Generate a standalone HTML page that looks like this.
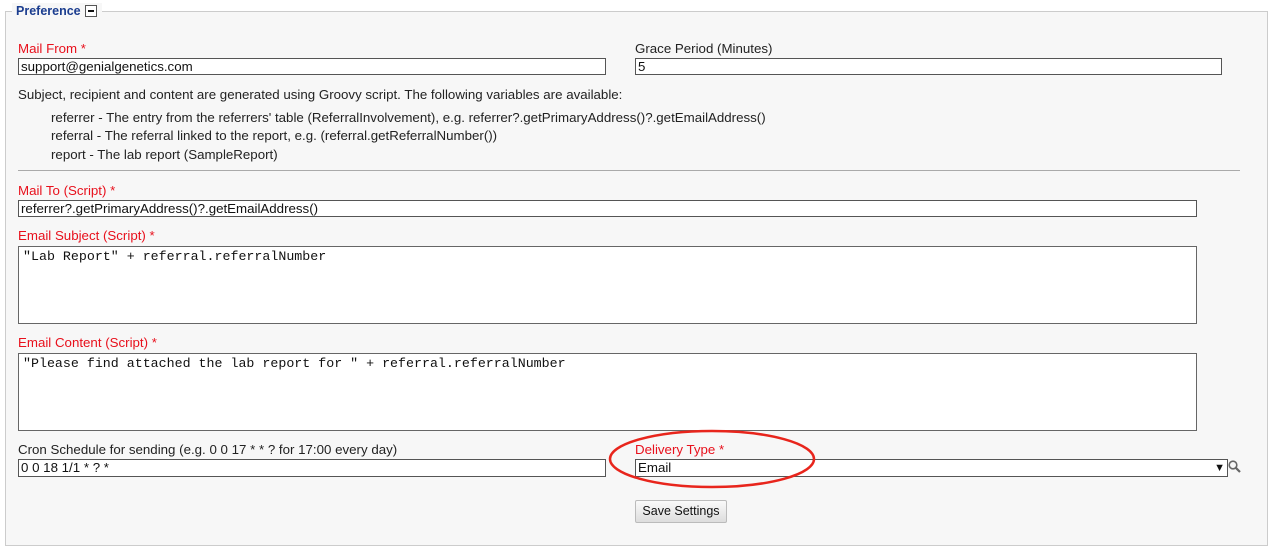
<!DOCTYPE html>
<html><head><style>
body{margin:0;width:1279px;height:552px;background:#fff;font-family:"Liberation Sans",sans-serif;font-size:13.3px;color:#222;position:relative;overflow:hidden}
.a{position:absolute;white-space:nowrap}
.fs{position:absolute;left:5px;top:11px;width:1261px;height:533px;border:1px solid #ccc;background:#f7f7f7}
.lbl{color:#e8101c}
.in{position:absolute;background:#fff;border:1px solid #555;box-sizing:border-box;font-size:13.3px;line-height:15px;padding-left:2px;color:#111}
.ta{position:absolute;background:#fff;border:1px solid #666;box-sizing:border-box;font-family:"Liberation Mono",monospace;font-size:13.3px;padding:2px 4px;color:#111}
</style></head><body>
<div class="fs"></div>
<div class="a" style="left:12px;top:3px;background:#f7f7f7;width:90px;height:16px"></div>
<div class="a" style="left:16px;top:4px;font-weight:bold;font-size:12.5px;color:#1b3d8f">Preference</div>
<div class="a" style="left:85px;top:5px;width:10px;height:10px;border:1px solid #555;background:#fff"><div style="position:absolute;left:2px;top:4px;width:6px;height:2px;background:#111"></div></div>

<div class="a lbl" style="left:18px;top:41px">Mail From *</div>
<div class="in" style="left:18px;top:58px;width:588px;height:17px">support@genialgenetics.com</div>
<div class="a" style="left:635px;top:41px">Grace Period (Minutes)</div>
<div class="in" style="left:635px;top:58px;width:587px;height:17px">5</div>

<div class="a" style="left:18px;top:87px">Subject, recipient and content are generated using Groovy script. The following variables are available:</div>
<div class="a" style="left:51px;top:110px">referrer - The entry from the referrers' table (ReferralInvolvement), e.g. referrer?.getPrimaryAddress()?.getEmailAddress()</div>
<div class="a" style="left:51px;top:128px">referral - The referral linked to the report, e.g. (referral.getReferralNumber())</div>
<div class="a" style="left:51px;top:147px">report - The lab report (SampleReport)</div>
<div class="a" style="left:18px;top:170px;width:1222px;height:1px;background:#aaa"></div>

<div class="a lbl" style="left:18px;top:183px">Mail To (Script) *</div>
<div class="in" style="left:18px;top:200px;width:1179px;height:17px">referrer?.getPrimaryAddress()?.getEmailAddress()</div>

<div class="a lbl" style="left:18px;top:228px">Email Subject (Script) *</div>
<div class="ta" style="left:18px;top:246px;width:1179px;height:78px">"Lab Report" + referral.referralNumber</div>

<div class="a lbl" style="left:18px;top:335px">Email Content (Script) *</div>
<div class="ta" style="left:18px;top:353px;width:1179px;height:78px">"Please find attached the lab report for " + referral.referralNumber</div>

<div class="a" style="left:18px;top:442px">Cron Schedule for sending (e.g. 0 0 17 * * ? for 17:00 every day)</div>
<div class="in" style="left:18px;top:459px;width:588px;height:18px">0 0 18 1/1 * ? *</div>
<div class="a lbl" style="left:635px;top:442px">Delivery Type *</div>
<div class="in" style="left:635px;top:459px;width:593px;height:18px">Email<span style="position:absolute;right:2px;top:1px;font-size:11px">▼</span></div>
<svg class="a" style="left:1228px;top:459px" width="14" height="16" viewBox="0 0 14 16"><circle cx="5" cy="6" r="3.8" fill="none" stroke="#666" stroke-width="1.6"/><line x1="7.8" y1="8.8" x2="12" y2="13" stroke="#666" stroke-width="2.2"/></svg>

<div class="a" style="left:635px;top:500px;width:92px;height:23px;border:1px solid #bbb;border-radius:2px;background:linear-gradient(#fafafa,#ddd);box-sizing:border-box;font-size:12.5px;text-align:center;line-height:21px;color:#111">Save Settings</div>

<svg class="a" style="left:605px;top:425px" width="215" height="70"><ellipse cx="107" cy="34" rx="102" ry="28" fill="none" stroke="#e8251c" stroke-width="2.5"/></svg>
</body></html>
